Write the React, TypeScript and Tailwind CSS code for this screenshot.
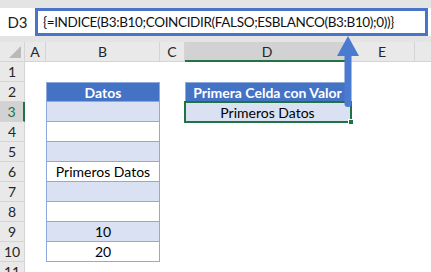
const font = { fontFamily: 'Lato, "Open Sans", sans-serif' }

const rows = [1, 2, 3, 4, 5, 6, 7, 8, 9, 10, 11]

const bCells: Record<number, { text?: string; fill: boolean }> = {
  3: { fill: true },
  4: { fill: false },
  5: { fill: true },
  6: { text: 'Primeros Datos', fill: false },
  7: { fill: true },
  8: { fill: false },
  9: { text: '10', fill: true },
  10: { text: '20', fill: false },
}

function ColHead({ label, w, active }: { label: string; w: string; active?: boolean }) {
  return (
    <div
      className={`${w} flex h-[20px] items-center justify-center border-r border-[#d4d4d4] text-[14px] text-[#262626] ${
        active ? 'border-b-2 border-b-[#217346] bg-[#d2d2d2] text-[#217346]' : 'border-b border-b-[#d4d4d4] bg-[#e9e9e9]'
      }`}
    >
      {label}
    </div>
  )
}

export default function App() {
  return (
    <div className="relative h-[272px] w-[431px] overflow-hidden bg-white" style={font}>
      {/* formula bar */}
      <div className="h-[8px] bg-[#e4e4e4]" />
      <div className="flex h-[28px] bg-white pr-[3px]">
        <div className="flex w-[35px] items-center justify-center text-[15px] text-[#222]">D3</div>
        <div className="flex flex-1 items-center border-[3px] border-[#4a74c6] pl-[5px] text-[13.5px] tracking-[-0.35px] text-[#111]">
          {'{=INDICE(B3:B10;COINCIDIR(FALSO;ESBLANCO(B3:B10);0))}'}
        </div>
      </div>
      <div className="h-[6px] bg-[#e4e4e4]" />

      {/* column headers */}
      <div className="flex">
        <div className="relative h-[20px] w-[25px] border-r border-b border-[#d4d4d4] bg-[#e9e9e9]">
          <div className="absolute right-[3px] bottom-[3px] h-0 w-0 border-b-[12px] border-l-[12px] border-b-[#b9b9b9] border-l-transparent" />
        </div>
        <ColHead label="A" w="w-[21px]" />
        <ColHead label="B" w="w-[114px]" />
        <ColHead label="C" w="w-[25px]" />
        <ColHead label="D" w="w-[165px]" active />
        <ColHead label="E" w="w-[65px]" />
        <div className="h-[20px] flex-1 border-b border-[#d4d4d4] bg-[#e9e9e9]" />
      </div>

      {/* rows */}
      {rows.map((r) => {
        const b = bCells[r]
        return (
          <div key={r} className="flex h-[20px]">
            <div
              className={`flex w-[25px] items-center justify-center border-b border-[#d4d4d4] text-[14px] ${
                r === 3
                  ? 'border-r-2 border-r-[#217346] bg-[#d2d2d2] text-[#217346]'
                  : 'border-r border-r-[#d4d4d4] bg-[#e9e9e9] text-[#262626]'
              }`}
            >
              {r}
            </div>
            <div className="w-[21px]" />
            {r === 2 ? (
              <div className="flex w-[114px] items-center justify-center border border-[#8eaadb] bg-[#4472c4] text-[14px] font-bold text-white">
                Datos
              </div>
            ) : b ? (
              <div
                className={`flex w-[114px] items-center justify-center border-x border-b border-[#8eaadb] text-[14px] text-black ${
                  b.fill ? 'bg-[#d9e1f2]' : 'bg-white'
                }`}
              >
                {b.text}
              </div>
            ) : (
              <div className="w-[114px]" />
            )}
            <div className="w-[25px]" />
            {r === 2 ? (
              <div className="flex w-[165px] items-center justify-center border border-[#8eaadb] bg-[#4472c4] text-[14px] font-bold text-white">
                Primera Celda con Valor
              </div>
            ) : r === 3 ? (
              <div className="flex w-[165px] items-center justify-center bg-[#d9e1f2] text-[14px] text-black">
                Primeros Datos
              </div>
            ) : (
              <div className="w-[165px]" />
            )}
          </div>
        )
      })}

      {/* selection outline on D3 */}
      <div className="absolute left-[184px] top-[101px] h-[22px] w-[168px] border-2 border-[#217346]" />
      <div className="absolute left-[348px] top-[119px] h-[6px] w-[6px] border border-white bg-[#217346]" />

      {/* arrow */}
      <svg className="absolute left-[335px] top-[34px]" width="26" height="74" viewBox="0 0 26 74">
        <path d="M13 2 L24 22 L16.5 22 L16.5 70 Q16.5 73 13 73 Q9.5 73 9.5 70 L9.5 22 L2 22 Z" fill="#4a7bd0" />
      </svg>
    </div>
  )
}
